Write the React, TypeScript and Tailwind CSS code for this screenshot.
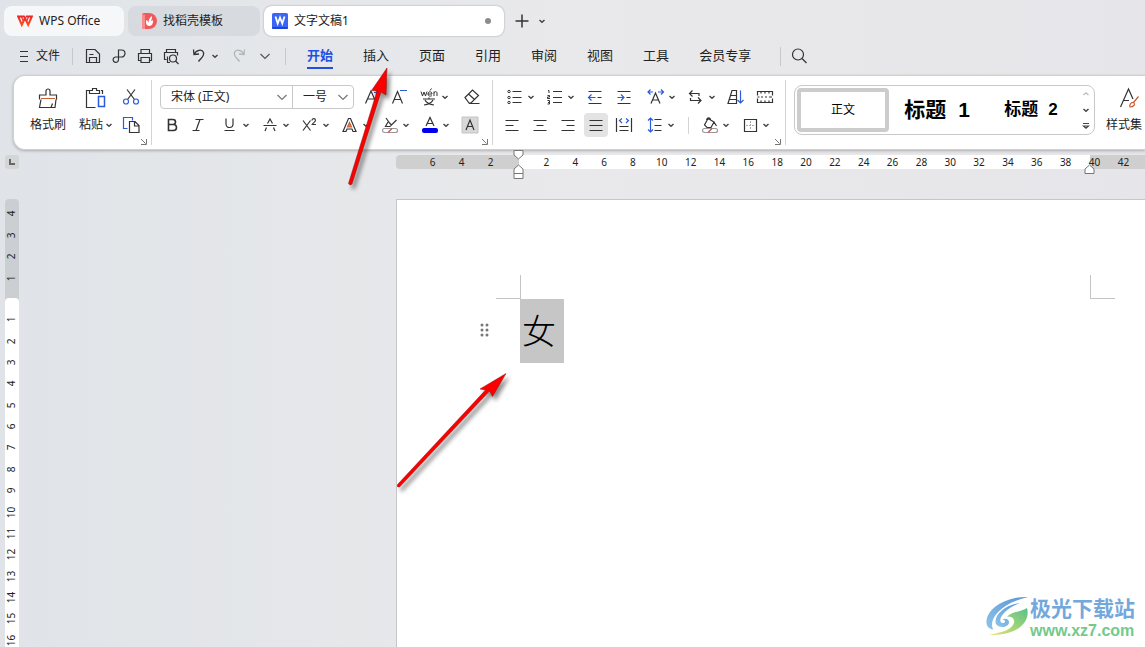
import type { ReactNode } from "react";

const INK = "#333333";
const BLUE = "#2b5bdb";

function Ico({
  size = 20,
  stroke = INK,
  children,
}: {
  size?: number;
  stroke?: string;
  children: ReactNode;
}) {
  return (
    <svg
      width={size}
      height={size}
      viewBox={`0 0 ${size} ${size}`}
      fill="none"
      stroke={stroke}
      strokeWidth="1.2"
      className="shrink-0"
      aria-hidden="true"
    >
      {children}
    </svg>
  );
}

function Caret() {
  return (
    <svg width="8" height="8" viewBox="0 0 8 8" fill="none" className="shrink-0" aria-hidden="true">
      <path d="M1.5 3L4 5.2 6.5 3" stroke="#444" strokeWidth="1.5" />
    </svg>
  );
}

function Chevron({ color = "#555" }: { color?: string }) {
  return (
    <svg width="12" height="12" viewBox="0 0 12 12" fill="none" className="shrink-0" aria-hidden="true">
      <path d="M1.5 4L6 8.5 10.5 4" stroke={color} strokeWidth="1.2" />
    </svg>
  );
}

function Tool({
  label,
  split,
  active,
  children,
}: {
  label: string;
  split?: boolean;
  active?: boolean;
  children: ReactNode;
}) {
  return (
    <button
      aria-label={label}
      className={`flex h-6 shrink-0 items-center rounded ${split ? "w-8 pl-[2px]" : "w-6 justify-center"} ${active ? "bg-[#e3e3e3]" : ""}`}
    >
      {children}
      {split && (
        <span className="ml-[2px]">
          <Caret />
        </span>
      )}
    </button>
  );
}

function Group({ children, className = "" }: { children: ReactNode; className?: string }) {
  return (
    <div className={`relative flex h-full shrink-0 items-start pt-[9px] ${className}`}>
      {children}
      <button aria-label="更多设置" className="absolute right-1 bottom-1">
        <svg width="7" height="7" viewBox="0 0 7 7" fill="none" stroke="#777" aria-hidden="true">
          <path d="M1 1l4.5 4.5M6.5 1v5.5H1" />
        </svg>
      </button>
    </div>
  );
}

function GroupLine() {
  return <div className="mt-1 h-[65px] w-px shrink-0 bg-[#d4d4d4]" />;
}

function TitleTabs() {
  return (
    <div className="flex h-[41px] shrink-0 items-center gap-1 pl-1 text-[12px] text-[#222]">
      <button className="flex h-[30px] w-[120px] items-center gap-[6px] rounded-lg bg-[#f6f7f8] pl-[13px]">
        <svg width="16" height="12" viewBox="0 0 16 12" fill="none" strokeWidth="2" aria-hidden="true">
          <path d="M7.500 1.500H1.200L4.800 10 8 3l3.200 7L14.800 1.500H9" stroke="url(#wps)" />
          <path d="M4.500 2l2 4.500M11.500 2l-2 4.500" stroke="url(#wps)" strokeWidth="1.2" />
          <defs>
            <linearGradient id="wps" x1="0" y1="0" x2="0" y2="12" gradientUnits="userSpaceOnUse">
              <stop stopColor="#e6202c" />
              <stop offset="1" stopColor="#ff5a1f" />
            </linearGradient>
          </defs>
        </svg>
        WPS Office
      </button>
      <button className="flex h-[30px] w-[132px] items-center gap-[6px] rounded-lg bg-[#d7dade] pl-[13px]">
        <svg width="16" height="16" viewBox="0 0 16 16" aria-hidden="true">
          <path d="M1 2a2 2 0 012-2h5a8 8 0 010 16H1z" fill="#f0595c" />
          <path d="M1 1.500h3V16H1z" fill="#f98b8a" />
          <path d="M8.500 13c-4-.5-4-4-3-6 1 .6 2 1.600 2.200 3C7.500 7 8.500 4.500 11 3c0 3-.5 4-1.500 5.500.8-.8 1.500-1.200 2.700-1.300C12 11 11 12.700 8.500 13z" fill="#fff" />
        </svg>
        找稻壳模板
      </button>
      <button className="flex h-[30px] w-[240px] items-center gap-[6px] rounded-lg bg-white pl-2 shadow-[0_0_2px_rgba(0,0,0,0.35)]">
        <svg width="16" height="16" viewBox="0 0 16 16" aria-hidden="true">
          <rect width="16" height="16" rx="1.500" fill="#3b66f5" />
          <path d="M0 14h16v.5a1.500 1.500 0 01-1.500 1.500h-13A1.500 1.500 0 010 14.500z" fill="#1b46d8" />
          <path d="M3.500 3.500L5.700 10.500 8 4.500l2.300 6 2.200-7" fill="none" stroke="#fff" strokeWidth="1.800" />
        </svg>
        文字文稿1
        <span className="mr-[13px] ml-auto size-[6px] rounded-full bg-[#8c8c8c]" />
      </button>
      <button aria-label="新建" className="ml-1 flex w-5 justify-center">
        <Ico size={16}>
          <path d="M8 1.500v13M1.500 8h13" strokeWidth="1.500" />
        </Ico>
      </button>
      <button aria-label="标签列表" className="flex w-3 justify-center">
        <Caret />
      </button>
    </div>
  );
}

const MENUS = ["开始", "插入", "页面", "引用", "审阅", "视图", "工具", "会员专享"];

function MenuBar() {
  return (
    <nav className="flex h-[34px] shrink-0 items-center pb-1 pl-[18px] text-[13px] text-[#222]">
      <button className="flex items-center gap-[6px] text-[12px]">
        <Ico size={12}>
          <path d="M2 1.500h8M2 6.500h8M2 11.500h8" strokeWidth="1" />
        </Ico>
        文件
      </button>
      <span className="ml-3 h-[17px] w-px bg-[#c6c8cb]" />
      <div className="ml-2 flex items-center gap-[2px]">
        <Tool label="保存">
          <Ico>
            <path d="M3.500 3.500h8.500l4.500 4.500v8.500h-13zM6.500 16.500v-5h7v5M6.500 8.500h4" />
          </Ico>
        </Tool>
        <Tool label="输出为PDF">
          <Ico>
            <path d="M9.500 11V4h3a3.500 3.500 0 010 7H7a2.700 2.700 0 102.500 2.700V11" />
          </Ico>
        </Tool>
        <Tool label="打印">
          <Ico>
            <path d="M6 7V3.500h8.500V7M6 14.500H3.500v-7h13v7h-2M6 11.500h8.500v5H6z" />
          </Ico>
        </Tool>
        <Tool label="打印预览">
          <Ico>
            <path d="M5.500 6.500v-3h9v3M5.500 13.500h-2v-7h13v3M6.500 16.500v-6" />
            <circle cx="12" cy="12.500" r="3.500" />
            <path d="M14.500 15l3 3M6 16.500h3" />
          </Ico>
        </Tool>
        <span className="ml-[2px] flex gap-2">
          <Tool label="撤销" split>
            <Ico>
              <path d="M4.500 3.500l.5 5 5-.5M5 8.500C7 4 13 2.500 14.500 6.500c1.200 3.500-2.500 5.500-5 9" strokeWidth="1.300" />
            </Ico>
          </Tool>
          <Tool label="恢复">
            <Ico stroke="#b2b5b8">
              <path d="M15.500 3.500l-.5 5-5-.5M15 8.500C13 4 7 2.500 5.500 6.500c-1.200 3.500 2.500 5.500 5 9" strokeWidth="1.300" />
            </Ico>
          </Tool>
        </span>
        <Tool label="自定义快速访问">
          <Chevron />
        </Tool>
      </div>
      <span className="ml-2 h-[17px] w-px bg-[#c6c8cb]" />
      <div className="ml-[21px] flex gap-[30px]">
        {MENUS.map((m, i) => (
          <button
            key={m}
            className={`h-[26px] border-b-2 py-[2px] leading-[20px] whitespace-nowrap ${i === 0 ? "border-[#1f50e0] font-bold text-[#1f50e0]" : "border-transparent"}`}
          >
            {m}
          </button>
        ))}
      </div>
      <span className="ml-[29px] h-[19px] w-px bg-[#c6c8cb]" />
      <button aria-label="搜索" className="ml-2">
        <Ico>
          <circle cx="9" cy="8.500" r="5.500" />
          <path d="M13 12.500l4.500 4.500" />
        </Ico>
      </button>
    </nav>
  );
}

function Clipboard() {
  return (
    <Group className="w-[137px] pl-4 text-[12px] leading-4 text-[#222]">
      <button className="flex w-9 flex-col items-center gap-[7px] pt-[1px] whitespace-nowrap">
        <Ico size={24}>
          <path d="M3.500 13.500v-4.500h6.500V5a2 2 0 014 0v4h6.500v4.500M5 13.500l-1.500 8h15.500l1-8M15 21.500l1.500-4" />
          <path d="M5 12.500h14" stroke="#c8623a" />
        </Ico>
        格式刷
      </button>
      <button className="ml-3 flex w-9 flex-col items-center gap-[7px] pt-[1px] whitespace-nowrap">
        <Ico size={24}>
          <path d="M5 4.500H2.500v17h9M17 4.500h1.500V8M5.500 7.500v-3h3v-2h4v2h3v3z" />
          <path d="M14.500 10.500h6v10h-6z" stroke={BLUE} strokeWidth="1.500" />
        </Ico>
        <span className="flex items-center gap-[2px]">
          粘贴
          <Caret />
        </span>
      </button>
      <div className="ml-[5px] flex flex-col gap-1">
        <Tool label="剪切">
          <Ico>
            <path d="M6 2.500l7.500 10M14 2.500l-7.500 10" />
            <g stroke={BLUE}>
              <circle cx="5" cy="14.500" r="2.500" />
              <circle cx="15" cy="14.500" r="2.500" />
            </g>
          </Ico>
        </Tool>
        <Tool label="复制">
          <Ico>
            <path d="M6.500 13.500h-4v-11h9v3" stroke={BLUE} />
            <path d="M8.500 6.500h5.500l4 4v7H8.500zM13.500 6.500V11H18" />
          </Ico>
        </Tool>
      </div>
    </Group>
  );
}

function Combo({
  label,
  value,
  className,
}: {
  label: string;
  value: string;
  className: string;
}) {
  return (
    <label className={`relative flex h-6 items-center ${className}`}>
      <select
        aria-label={label}
        defaultValue={value}
        className="size-full appearance-none bg-transparent pl-[10px] text-[12px] text-[#222] outline-none"
      >
        <option>{value}</option>
      </select>
      <span className="pointer-events-none absolute right-1">
        <Chevron color="#777" />
      </span>
    </label>
  );
}

function FontGroup() {
  return (
    <Group className="w-[340px] pl-2">
      <div className="flex w-[324px] flex-col gap-1">
        <div className="flex items-center gap-[6px]">
          <div className="flex w-[194px] rounded border border-[#c8c8c8]">
            <Combo label="字体" value="宋体 (正文)" className="-my-px w-[131px]" />
            <Combo label="字号" value="一号" className="-my-px w-[61px] border-l border-[#c8c8c8]" />
          </div>
          <div className="flex gap-[3px]">
            <Tool label="增大字号">
              <Ico>
                <path d="M3.500 16.500L9 4l5.500 12.500M5.500 12h7" />
                <path d="M12 5.500h6M15 2.500v6" stroke={BLUE} />
              </Ico>
            </Tool>
            <Tool label="减小字号">
              <Ico>
                <path d="M3.500 16.500L8.500 4.500l5 12M5 12.500h7" />
                <path d="M11 3.500h7" stroke={BLUE} />
              </Ico>
            </Tool>
          </div>
          <Tool label="拼音指南" split>
            <Ico>
              <path d="M2 4.500l1.500 4.500L5 5l1.500 4L8 4.500M9 7h4c0-3-4-3-4 0 0 2.500 3 2.500 4 1.500M11 3.500l1.500-2M15 9V4.500M15 6c1-2 3-1.500 3 0v3" strokeWidth="1" />
              <path d="M4 12h12M10 10.500V12M6 13c1.500 3 5 4.500 9 5M14 13c-1.500 3-5 4.500-9 5" />
            </Ico>
          </Tool>
          <span className="ml-auto">
            <Tool label="清除格式">
              <Ico>
                <path d="M3 10.500L10.500 3l6 5.500-7.500 7.500H7zM6.500 7l6 5.500M7 16.500h10.500" />
              </Ico>
            </Tool>
          </span>
        </div>
        <div className="flex items-center gap-2">
          <div className="flex gap-[2px]">
            <Tool label="加粗">
              <Ico>
                <path d="M6.500 4.500h4.500a2.500 2.500 0 010 5H6.500zM6.500 9.500h5a3 3 0 010 6h-5z" strokeWidth="1.600" />
              </Ico>
            </Tool>
            <Tool label="倾斜">
              <Ico>
                <path d="M7.500 4.500h8M4.500 15.500h7M12 4.500l-4 11" />
              </Ico>
            </Tool>
          </div>
          <Tool label="下划线" split>
            <Ico>
              <path d="M6 3.500V9a3.500 3.500 0 007 0V3.500M4.500 15.500h10" />
            </Ico>
          </Tool>
          <Tool label="删除线" split>
            <Ico>
              <path d="M3.500 10.500h13M7.500 8.500L10 4l2.500 4.500M6.500 12.500l-1.500 3.500M13.500 12.500l1.500 3.500" />
            </Ico>
          </Tool>
          <Tool label="上标" split>
            <Ico>
              <path d="M3 5.500l7.500 10M10.500 5.500L3 15.500" />
              <path d="M12 5.500c0-2.500 3.500-2.500 3.500 0 0 1-3.500 3.500-3.500 4h4" strokeWidth="1.100" />
            </Ico>
          </Tool>
          <Tool label="文字效果" split>
            <Ico>
              <path d="M3 16.500L8.500 3.500h2l5.500 13h-3l-1-2.500H7l-1 2.500z" />
              <path d="M7.500 12L9.500 7.500 11.500 12z" stroke="#c8623a" fill="#e8894f" />
            </Ico>
          </Tool>
          <Tool label="突出显示" split>
            <Ico>
              <path d="M6 3l3.500 5M8 7l-2.500 4.500h4.500L16.500 5M9.500 8l2 2" />
              <rect x="2.500" y="13.500" width="15" height="4" rx="2" stroke="#999" />
              <path d="M8 17.500l4-4" stroke="#e34848" />
            </Ico>
          </Tool>
          <Tool label="字体颜色" split>
            <Ico>
              <path d="M6 11l4-8.500 4 8.500M7.500 8.500h5" />
              <rect x="2" y="13" width="16" height="5" rx="2" fill="#0000ee" stroke="none" />
            </Ico>
          </Tool>
          <Tool label="字符底纹">
            <Ico>
              <path d="M2 2h16v16H2z" fill="#d8d8d8" stroke="#c4c4c4" strokeWidth="1" />
              <path d="M6 15l4-10 4 10M7.500 11.500h5" />
            </Ico>
          </Tool>
        </div>
      </div>
    </Group>
  );
}

function ParagraphGroup() {
  return (
    <Group className="w-[292px] pl-[7px]">
      <div className="flex flex-col gap-1">
        <div className="ml-[3px] flex items-center gap-2">
          <Tool label="项目符号" split>
            <Ico>
              <path d="M7.500 4.500h9M7.500 10.500h9M7.500 15.500h9" />
              <g strokeWidth="1">
                <circle cx="4" cy="4.500" r="1.200" />
                <circle cx="4" cy="10.500" r="1.200" />
                <circle cx="4" cy="15.500" r="1.200" />
              </g>
            </Ico>
          </Tool>
          <Tool label="编号" split>
            <Ico>
              <path d="M8 4.500h9M8 10.500h9M8 15.500h9" />
              <path d="M3 3.500h1V6M2.500 8.500h2V10h-2v1.500h2.500M2.500 13.500h2v3.500h-2M3 15.500h1.500" strokeWidth="1" />
            </Ico>
          </Tool>
          <div className="flex gap-[5px]">
            <Tool label="减少缩进">
              <Ico>
                <path d="M3.500 4.500h13M12.500 10.500h4M3.500 16.500h13" />
                <path d="M10.500 10.500h-7M6.500 7.500l-3 3 3 3" stroke={BLUE} />
              </Ico>
            </Tool>
            <Tool label="增加缩进">
              <Ico>
                <path d="M3.500 4.500h13M12.500 10.500h4M3.500 16.500h13" />
                <path d="M3.500 10.500H10M7 7.500l3 3-3 3" stroke={BLUE} />
              </Ico>
            </Tool>
          </div>
          <Tool label="字符缩放" split>
            <Ico>
              <path d="M5 16.500L9.500 6l4.500 10.500M6.500 13h6" />
              <path d="M7 5H2.500M4.500 2.500L2 5l2.500 2.500M12 5h5M15 2.500L17.500 5 15 7.500" stroke={BLUE} />
            </Ico>
          </Tool>
          <Tool label="换行" split>
            <Ico>
              <path d="M6.500 3.500l-3 3 3 3M3.500 6.500H13V9M12 10.500l3 3-3 3M15 13.500H4.500V11" />
            </Ico>
          </Tool>
          <div className="flex gap-[5px]">
            <Tool label="排序">
              <Ico>
                <path d="M2 16.500L6 3.500h4.500v13zM4.500 8.500h6M3.500 12.500h7" />
                <path d="M14.500 3.500v12.500M11.500 13l3 3 3-3" stroke={BLUE} />
              </Ico>
            </Tool>
            <Tool label="显示标尺">
              <Ico>
                <path d="M2.500 8.500v-4h15v4M2.500 11.500v4h15v-4M6 4.500v2M10 4.500v2M14 4.500v2M6 15.500v-2M10 15.500v-2M14 15.500v-2" />
                <path d="M2.500 10h2M6 10h2M10 10h2M14 10h3" strokeWidth="1" />
              </Ico>
            </Tool>
          </div>
        </div>
        <div className="flex items-center gap-1">
          <Tool label="左对齐">
            <Ico>
              <path d="M3.500 5.500h13M3.500 10.500h8M3.500 15.500h13" />
            </Ico>
          </Tool>
          <Tool label="居中对齐">
            <Ico>
              <path d="M3.500 5.500h13M6.500 10.500h7M3.500 15.500h13" />
            </Ico>
          </Tool>
          <Tool label="右对齐">
            <Ico>
              <path d="M3.500 5.500h13M8.500 10.500h8M3.500 15.500h13" />
            </Ico>
          </Tool>
          <Tool label="两端对齐" active>
            <Ico>
              <path d="M3.500 5.500h13M3.500 10.500h13M3.500 15.500h13" />
            </Ico>
          </Tool>
          <Tool label="分散对齐">
            <Ico>
              <path d="M2.500 3v14M17.500 3v14M5.500 11.500h9M5.500 15.500h9" />
              <path d="M8 3.500l-2.500 2L8 8M12 3.500l2.500 2L12 8" stroke={BLUE} />
            </Ico>
          </Tool>
          <div className="ml-[3px] flex">
            <Tool label="行距" split>
              <Ico>
                <path d="M9.500 4.500h7M9.500 10.500h7M9.500 15.500h7" />
                <path d="M5.500 3v14M3 5.500L5.500 3 8 5.500M3 14.500L5.500 17 8 14.500" stroke={BLUE} />
              </Ico>
            </Tool>
          </div>
          <span className="mr-[5px] ml-[9px] h-[17px] w-px bg-[#d4d4d4]" />
          <div className="flex gap-2">
            <Tool label="底纹颜色" split>
              <Ico>
                <path d="M8 3.500l6 3.500-3 5.500H7L4.500 10zM6.500 5c1-3 4-2.500 4 0M14 7l2.500 4" />
                <rect x="2.500" y="13.500" width="15" height="4" rx="2" stroke="#999" />
                <path d="M8 17.500l4-4" stroke="#e34848" />
              </Ico>
            </Tool>
            <Tool label="边框" split>
              <Ico>
                <path d="M4.500 4.500h12v12h-12z" />
                <path d="M10.500 6v9M6 10.500h9" stroke="#aaa" strokeWidth="1" strokeDasharray="2 1" />
              </Ico>
            </Tool>
          </div>
        </div>
      </div>
    </Group>
  );
}

function Styles() {
  return (
    <div className="flex shrink-0 pt-[9px] pl-2 text-black">
      <div className="flex h-[50px] w-[301px] items-center gap-[2px] rounded-lg border border-[#c8c8c8] p-[2px] font-['Liberation_Sans','Noto_Sans_CJK_SC',sans-serif]">
        <button className="h-11 w-[92px] rounded border-4 border-[#cccccc] text-[12px]">正文</button>
        <button className="flex h-11 w-[92px] items-center justify-center gap-3 text-[21px] font-bold whitespace-nowrap">
          标题 <span>1</span>
        </button>
        <button className="flex h-11 w-[92px] items-center justify-center gap-[10px] text-[17px] font-bold whitespace-nowrap">
          标题 <span>2</span>
        </button>
        <div className="flex flex-1 flex-col items-center gap-2">
          <button aria-label="上一行">
            <svg width="8" height="8" viewBox="0 0 8 8" fill="none" stroke="#bbb" aria-hidden="true">
              <path d="M1.500 5L4 2.800 6.500 5" strokeWidth="1.300" />
            </svg>
          </button>
          <button aria-label="下一行">
            <Caret />
          </button>
          <button aria-label="展开样式">
            <svg width="8" height="8" viewBox="0 0 8 8" fill="none" stroke="#444" aria-hidden="true">
              <path d="M1 1.500h6M1.500 4L4 6.200 6.500 4z" strokeWidth="1.200" />
            </svg>
          </button>
        </div>
      </div>
      <button className="ml-[11px] flex flex-col items-center gap-[7px] pt-[1px] text-[12px] leading-4 whitespace-nowrap text-[#222]">
        <span className="pl-3">
          <Ico size={24}>
            <path d="M2.500 21L10.500 3l4.500 10M6 14.500h5" />
            <path d="M20.500 10.500l-5 6M12 21c-1-2 1-5 3.500-4.500 2.500 2-.5 4.500-3.500 4.500z" stroke="#d0592c" />
          </Ico>
        </span>
        样式集
      </button>
    </div>
  );
}

const LEFT_MARKS = [6, 4, 2];
const BODY_MARKS = Array.from({ length: 19 }, (_, i) => (i + 1) * 2);
const RIGHT_MARKS = [40, 42];

function Indent({ className, lower }: { className: string; lower?: "single" | "double" }) {
  return (
    <svg
      width="11"
      height={lower === "double" ? 16 : 10}
      className={`absolute ${className}`}
      fill="#fff"
      stroke="#777"
      aria-hidden="true"
    >
      {lower ? (
        <path d="M1 9.500V5L5.500 1 10 5v4.500z" />
      ) : (
        <path d="M1 .5h9v4.500L5.500 9 1 5z" />
      )}
      {lower === "double" && <path d="M1 9.500h9v5H1z" />}
    </svg>
  );
}

function Ruler() {
  return (
    <div className="mt-[5px] flex h-[14px] shrink-0 pl-[5px] text-[10px] leading-[14px] text-[#222]">
      <button
        aria-label="制表符"
        className="flex w-[14px] shrink-0 items-center justify-center rounded-[3px] bg-[#d3d5d7]"
      >
        <svg width="6" height="6" fill="none" stroke="#666" strokeWidth="2" aria-hidden="true">
          <path d="M1 0v5h5" />
        </svg>
      </button>
      <div className="ml-[377px] flex min-w-0 flex-1">
        <div className="flex w-[123px] shrink-0 rounded-l bg-[#cfcfcf] pr-[14px] pl-[22px]">
          {LEFT_MARKS.map((n) => (
            <span key={n} className="flex-1 text-center">{n}</span>
          ))}
        </div>
        <div className="relative flex w-[571px] shrink-0 bg-white pr-[10px] pl-[13px]">
          {BODY_MARKS.map((n) => (
            <span key={n} className="flex-1 text-center">{n}</span>
          ))}
          <Indent className="-top-[5px] -left-[6px]" />
          <Indent className="top-[9px] -left-[6px]" lower="double" />
        </div>
        <div className="relative flex min-w-0 flex-1 bg-[#cfcfcf]">
          <div className="-ml-[10px] flex">
            {RIGHT_MARKS.map((n) => (
              <span key={n} className="w-[29px] text-center">{n}</span>
            ))}
          </div>
          <Indent className="top-[9px] -left-[6px]" lower="single" />
        </div>
      </div>
    </div>
  );
}

const SIDE_TOP = [4, 3, 2, 1];
const SIDE_BODY = Array.from({ length: 16 }, (_, i) => i + 1);

function SideRuler() {
  return (
    <div className="flex w-[14px] shrink-0 flex-col rounded-t bg-[#cccfd1] text-[10px] text-[#222]">
      <div className="flex h-[99px] shrink-0 flex-col pt-1 pb-[9px]">
        {SIDE_TOP.map((n) => (
          <span key={n} className="flex flex-1 items-center justify-center">
            <span className="-rotate-90">{n}</span>
          </span>
        ))}
      </div>
      <div className="flex flex-1 flex-col rounded-t bg-white pt-[11px]">
        <div className="flex h-[342px] shrink-0 flex-col">
          {SIDE_BODY.map((n) => (
            <span key={n} className="flex h-0 flex-1 items-center justify-center">
              <span className="-rotate-90">{n}</span>
            </span>
          ))}
        </div>
      </div>
    </div>
  );
}

function Page() {
  return (
    <main className="ml-[377px] w-[818px] shrink-0 border-t border-l border-[#c6c6c8] bg-white pt-[75px]">
      <div className="flex justify-between px-[99px]">
        <span className="h-6 w-[25px] border-r border-b border-[#c4c4c4]" />
        <span className="h-6 w-[25px] border-b border-l border-[#c4c4c4]" />
      </div>
      <div className="flex h-16 items-center pl-[83px]">
        <svg width="9" height="16" fill="#777" aria-hidden="true">
          {[2, 7, 12].map((y) => (
            <g key={y}>
              <circle cx="2" cy={y} r="1.500" />
              <circle cx="7" cy={y} r="1.500" />
            </g>
          ))}
        </svg>
        <p className="ml-[31px] h-16 w-11 bg-[#c6c6c6] pl-[2px] font-['Noto_Sans_CJK_SC',serif] text-[34px] leading-[62px] font-light text-black">
          女
        </p>
      </div>
    </main>
  );
}

function Arrows() {
  return (
    <svg
      width="520"
      height="500"
      className="pointer-events-none absolute top-0 left-0 drop-shadow-[3px_4px_2px_rgba(0,0,0,0.45)]"
      fill="#fc0000"
      stroke="#8b1010"
      strokeWidth="0.5"
      aria-hidden="true"
    >
      <path d="M387 68l-1 27-5-3-29 92q-2 2-3.500-.5L377 91l-5.500-.5z" />
      <path d="M506 373.500l-13.500 23-3-5.500-90 96q-3 .5-2-2.500l88-94.500-5.500-1z" />
    </svg>
  );
}

function Watermark() {
  return (
    <div className="absolute right-[10px] bottom-[7px] flex items-center gap-[2px] whitespace-nowrap">
      <svg width="42" height="42" viewBox="0 0 42 42" aria-hidden="true">
        <defs>
          <linearGradient id="swirlBlue" x1="0" y1="1" x2="1" y2="0">
            <stop stopColor="#8cc4e8" />
            <stop offset="1" stopColor="#5b95d6" />
          </linearGradient>
          <linearGradient id="swirlGreen" x1="0" y1="1" x2="1" y2="0">
            <stop stopColor="#e6e56a" />
            <stop offset="1" stopColor="#58c08a" />
          </linearGradient>
        </defs>
        <path d="M42 1C24 0 2 10 .5 25c-.5 6 3 8 7 8.500C2 26 11 8 42 1z" fill="url(#swirlBlue)" />
        <path d="M34 7C18 9 7 20 10 28c3 5 13 3.500 13-2 0-3-4-4.500-6.500-2 4-.5 3 3.500-.5 3C11 25 17 13 34 7z" fill="url(#swirlBlue)" />
        <path d="M41 12c4 14-10 28-38 27 12-3 22-4 25-12 1-5-3-7-7-6 4-6 15-5 20-9z" fill="url(#swirlGreen)" />
      </svg>
      <div className="flex flex-col">
        <span className="text-[21px] leading-7 font-bold text-[#73a8dc]">极光下载站</span>
        <a href="#" className="font-['Liberation_Sans',sans-serif] text-[16px] leading-[18px] font-bold text-[#72ca8c]">
          www.xz7.com
        </a>
      </div>
    </div>
  );
}

export default function App() {
  return (
    <div className="relative flex h-screen flex-col overflow-hidden bg-linear-to-r from-[#e0e4e8] via-[#e9e9eb] to-[#e6e5e9] font-['Noto_Sans','Noto_Sans_CJK_SC',sans-serif]">
      <TitleTabs />
      <MenuBar />
      <section className="ml-[13px] flex h-[75px] shrink-0 overflow-hidden rounded-l-xl border border-r-0 border-[#cfd0d2] bg-white shadow-[0_1px_3px_rgba(0,0,0,0.25)]">
        <Clipboard />
        <GroupLine />
        <FontGroup />
        <GroupLine />
        <ParagraphGroup />
        <GroupLine />
        <Styles />
      </section>
      <Ruler />
      <div className="mt-[30px] flex flex-1 pl-[5px]">
        <SideRuler />
        <Page />
      </div>
      <Arrows />
      <Watermark />
    </div>
  );
}
